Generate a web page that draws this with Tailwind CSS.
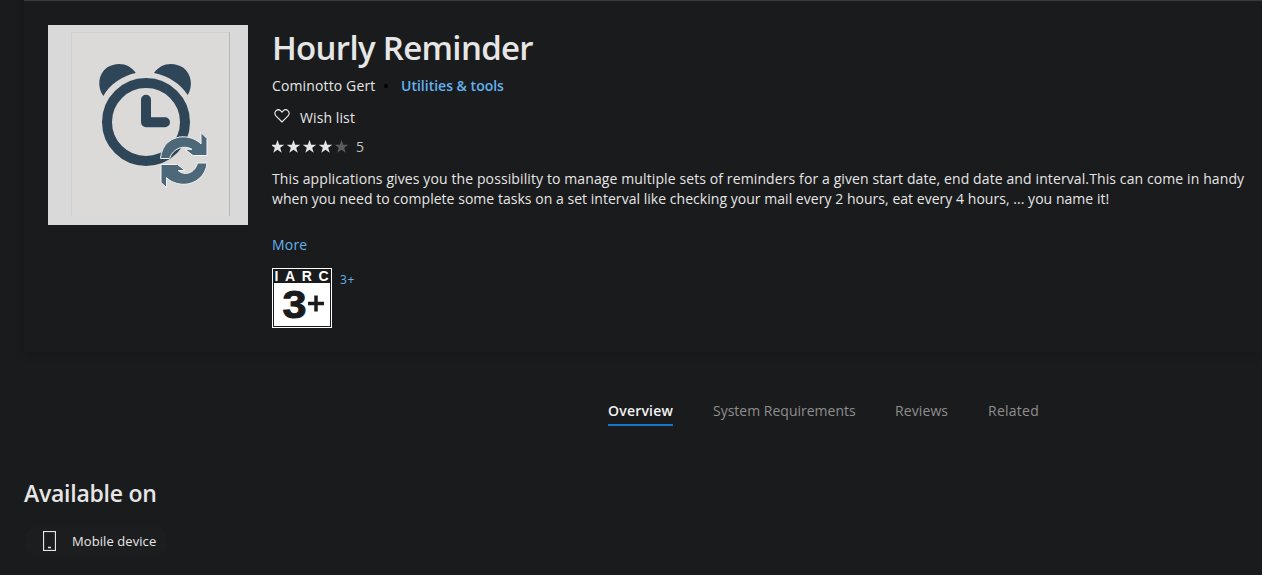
<!DOCTYPE html>
<html lang="en">
<head>
    <meta charset="UTF-8">
    <meta name="viewport" content="width=device-width, initial-scale=1.0">
    <title>Hourly Reminder</title>
    <script src="https://cdn.jsdelivr.net/npm/@tailwindcss/browser@4"></script>
</head>
<body class="h-screen overflow-hidden bg-[#1a1b1c] font-['Open_Sans',sans-serif] text-[14px] text-[#e6e6e6]">

    <!-- Product Header -->
    <section class="ml-6 h-[352px] border-t border-[#3a3b3c] bg-[#1a1b1c] shadow-[0_2px_10px_rgba(0,0,0,0.18)] flex pl-6 pt-6">

        <!-- App Icon -->
        <svg class="w-[200px] h-[200px] shrink-0" viewBox="0 0 200 200" fill="none">
            <rect width="200" height="200" fill="#d9d9d9" />
            <rect x="23" y="7" width="159" height="184" fill="#dbdad9" />
            <path d="M23.5 191V7.500H181" stroke="#d0d0d0" />
            <path d="M181.500 7V191" stroke="#b9b9b9" />
            <path d="M55.300 71C49 62 50 49 59 42.500C69 36 82 38.500 87.800 48C74 51 62 59 55.300 71Z" fill="#2e4657" />
            <path d="M139.700 70C145 62 144 49 135 42.500C125 36 112 38.500 106 48C120 51 132 58 139.700 70Z" fill="#2e4657" />
            <circle cx="98" cy="97" r="39" stroke="#2e4657" stroke-width="10" />
            <path d="M98 74.700V97.300H117" stroke="#2e4657" stroke-width="10" stroke-linecap="round" stroke-linejoin="round" />
            <path d="M129 135L136 122L145 131L148 138L137 145Z" fill="#dbdad9" />
            <g fill="#4d6879" stroke="#f2f4f5" stroke-width="1">
                <path d="M112.500 133.500C113.500 119 124 111.800 135 111.800C143 111.800 149 115 153 119V107.500L159 113.500V130.500H145L137 124.300H144C136 119.500 125 123 121.500 133.500Z" />
                <path d="M113 139.500H129.500L137 145.500H130C137 151.500 147 148 149.500 138H159C158 151 147 159.300 136 159.300C129 159.300 122 156.500 118.500 152.500V162.500L113 157.500Z" />
            </g>
        </svg>

        <!-- App Details -->
        <div class="ml-6 flex flex-col whitespace-nowrap">
            <h1 class="h-[46px] text-[33px] leading-[46px] font-semibold tracking-[-0.68px]">Hourly Reminder</h1>

            <div class="mt-[5px] h-5 flex items-center leading-5">
                <span class="w-[103px] tracking-[0.13px]">Cominotto Gert</span>
                <span class="ml-[9px] w-1 h-1 rounded-full bg-black"></span>
                <a href="#" class="ml-[13px] font-semibold text-[#63b1f1]">Utilities &amp; tools</a>
            </div>

            <button class="mt-3 h-5 flex items-center leading-5">
                <svg class="ml-[2px] mb-1 w-4 h-4" viewBox="0 0 16 16" fill="none" stroke="#e6e6e6" stroke-width="1.200">
                    <path d="M8 14L1.900 7.900C.5 6.500 .5 4.200 1.900 2.900C3.300 1.500 5.400 1.500 6.800 2.900L8 4.100L9.200 2.900C10.600 1.500 12.700 1.500 14.100 2.900C15.500 4.200 15.500 6.500 14.100 7.900Z" />
                </svg>
                <span class="ml-[10px] tracking-[0.1px]">Wish list</span>
            </button>

            <!-- Rating -->
            <div class="mt-[9px] h-5 flex items-center leading-5">
                <svg class="w-20 h-4" viewBox="0 0 80 16" fill="#e6e6e6">
                    <defs>
                        <path id="star" d="M5.500 1L7.200 5.800H12.300L8.200 8.800L9.700 13.700L5.500 10.700L1.300 13.700L2.800 8.800L-1.300 5.800H3.800Z" />
                    </defs>
                    <use href="#star" />
                    <use href="#star" x="16" />
                    <use href="#star" x="32" />
                    <use href="#star" x="48" />
                    <use href="#star" x="64" fill="#5c5c5c" />
                </svg>
                <span class="ml-1 text-[#c4c4c4]">5</span>
            </div>

            <p class="mt-3 leading-5"><span class="tracking-[0.108px]">This applications gives you the possibility to manage multiple sets of reminders for a given start date, end date and interval.This can come in handy</span><br><span class="tracking-[0.035px]">when you need to complete some tasks on a set interval like checking your mail every 2 hours, eat every 4 hours, ... you name it!</span></p>
            <a href="#" class="mt-[26px] leading-5 tracking-[0.2px] text-[#63b1f1]">More</a>

            <!-- Age Rating -->
            <div class="mt-[13px] flex">
                <svg class="w-[60px] h-[60px]" viewBox="0 0 60 60">
                    <rect width="60" height="60" fill="#fff" />
                    <rect x="1" y="1" width="58" height="58" fill="#1a1b1c" />
                    <rect x="2" y="15" width="56" height="43" fill="#fff" />
                    <g class="font-['Liberation_Sans',sans-serif] font-bold">
                        <text x="2.500" y="13" font-size="14" fill="#fff" textLength="54">IARC</text>
                        <text x="10.500" y="50" font-size="39" fill="#1a1b1c" stroke="#1a1b1c" stroke-width="1" textLength="24" lengthAdjust="spacingAndGlyphs">3</text>
                    </g>
                    <path d="M36 35.500H52M44 27.500V43.500" stroke="#1a1b1c" stroke-width="3.500" />
                </svg>
                <a href="#" class="ml-2 mt-[2px] text-[12px] leading-5 tracking-[0.7px] text-[#63b1f1]">3+</a>
            </div>
        </div>
    </section>

    <!-- Tabs -->
    <nav class="mt-[49px] ml-[608px] flex gap-10 leading-5 whitespace-nowrap text-[#8e8e8e]">
        <a href="#" class="w-[65px] h-[25px] border-b-2 border-[#1775c6] font-semibold text-[#f2f2f2] tracking-[0.2px]">Overview</a>
        <a href="#" class="w-[142px]">System Requirements</a>
        <a href="#" class="w-[53px] tracking-[0.1px]">Reviews</a>
        <a href="#" class="tracking-[0.25px]">Related</a>
    </nav>

    <!-- Available On -->
    <section class="ml-6 mt-[51px]">
        <h2 class="text-[23px] leading-8 font-semibold tracking-[-0.25px]">Available on</h2>
        <div class="mt-[17px] w-[144px] h-[30px] rounded-full bg-[#1c1d1e] flex items-center pl-[19px] text-[13px] whitespace-nowrap">
            <svg class="w-[13px] h-5" viewBox="0 0 13 20" fill="none" stroke="#e6e6e6">
                <rect x=".5" y=".5" width="12" height="19" stroke-width="1.200" />
                <path d="M5 16.500H8" stroke-width="1.500" />
            </svg>
            <span class="ml-4 mt-[2px] tracking-[0.08px]">Mobile device</span>
        </div>
    </section>
</body>
</html>
